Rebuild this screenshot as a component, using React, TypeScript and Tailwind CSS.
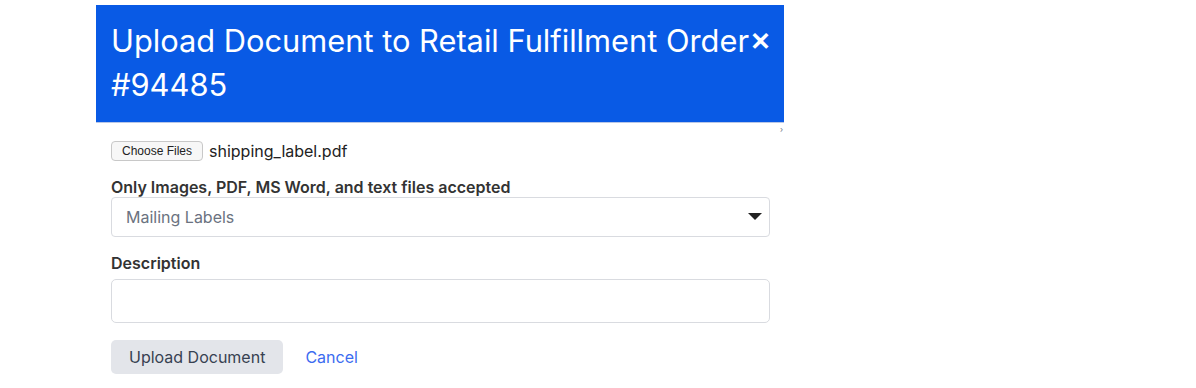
import React from "react";

const App = () => {
  return (
    <div className="min-h-screen bg-white pt-[5px] pl-[96px] font-['Inter',sans-serif]">
      <div className="w-[688px]">
        <div className="flex items-start bg-[#095ae5] pl-[15px] pr-[14px] pt-[14px] pb-[15px] border-b border-[#b9c7e6]">
          <h1 className="flex-1 text-[30.8px] leading-[44px] text-white font-normal">
            Upload Document to Retail Fulfillment Order #94485
          </h1>
          <span className="w-[20px] text-white text-[25px] leading-[32px] font-bold mt-[6px]">✕</span>
        </div>
        <div className="relative pl-[15px] pr-[14px] pt-[16px]">
          <span className="absolute right-[1px] top-[0px] text-[8px] text-gray-500">›</span>
          <div className="flex items-center gap-[6px] h-[24px]">
            <button className="h-[20px] px-[10px] text-[12px] leading-none text-[#222] bg-[#f7f7f7] border border-[#c8c8c8] rounded-[4px] font-['Liberation_Sans',sans-serif]">
              Choose Files
            </button>
            <span className="text-[16px] text-[#222]">shipping_label.pdf</span>
          </div>
          <div className="mt-[14px] text-[16px] font-semibold text-[#333] leading-[20px]">
            Only Images, PDF, MS Word, and text files accepted
          </div>
          <div className="h-[40px] flex items-center justify-between border border-[#d9dbe0] rounded-[4px] pl-[14px] pr-[6px]">
            <span className="text-[16px] text-[#6b7280]">Mailing Labels</span>
            <svg width="14" height="8" viewBox="0 0 14 8" className="mr-[1px]">
              <path d="M0 0 H14 L7 7 Z" fill="#222" />
            </svg>
          </div>
          <div className="mt-[16px] text-[16px] font-semibold text-[#333] leading-[20px]">Description</div>
          <div className="mt-[6px] h-[44px] border border-[#d9dbe0] rounded-[5px]" />
          <div className="mt-[17px] flex items-center gap-[22px]">
            <button className="h-[34px] px-[18px] bg-[#e3e5ea] rounded-[5px] text-[16px] text-[#374151]">
              Upload Document
            </button>
            <span className="text-[16px] text-[#3b6cf0]">Cancel</span>
          </div>
        </div>
      </div>
    </div>
  );
};

export default App;
